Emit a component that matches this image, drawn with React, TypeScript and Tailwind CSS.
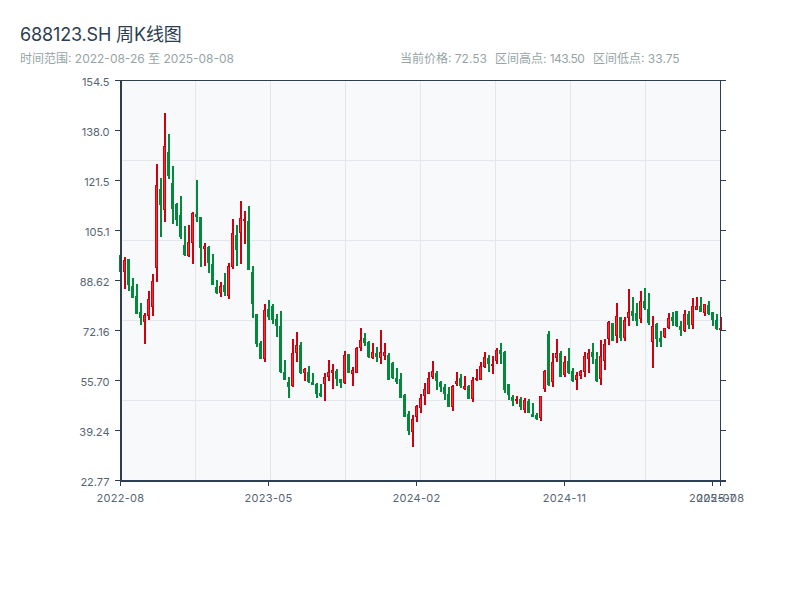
// Weekly candles, read as plot pixels: [wickTop, wickBottom, bodyTop, bodyBottom, rising]
type Candle = [number, number, number, number, 0 | 1];

const candles: Candle[] = [
  [255, 272, 255, 272, 0], [257, 289, 260, 272, 1], [259, 291, 259, 285, 0], [278, 298, 286, 298, 0],
  [284, 314, 296, 314, 0], [303, 325, 312, 318, 0], [313, 344, 315, 322, 1], [291, 320, 299, 316, 1],
  [274, 316, 281, 307, 1], [164, 282, 185, 268, 1], [178, 237, 189, 205, 0], [113, 222, 146, 210, 1],
  [134, 179, 152, 176, 0], [166, 224, 183, 209, 0], [203, 226, 204, 220, 0], [196, 239, 215, 237, 0],
  [226, 256, 245, 255, 0], [225, 257, 242, 256, 1], [212, 264, 213, 243, 1], [180, 222, 214, 217, 0],
  [217, 267, 217, 248, 0], [243, 266, 246, 249, 1], [246, 273, 247, 263, 0], [254, 285, 264, 285, 0],
  [280, 294, 287, 293, 0], [282, 297, 286, 293, 1], [273, 296, 285, 292, 0], [263, 299, 266, 296, 1],
  [219, 269, 233, 267, 1], [225, 266, 235, 250, 0], [201, 264, 218, 233, 1], [211, 244, 219, 221, 1],
  [206, 270, 221, 270, 0], [266, 318, 272, 304, 0], [314, 347, 314, 344, 0], [341, 359, 343, 359, 0],
  [304, 362, 310, 359, 1], [300, 320, 309, 317, 0], [304, 324, 306, 320, 0], [314, 337, 319, 326, 0],
  [311, 373, 326, 372, 0], [360, 380, 372, 380, 0], [377, 398, 382, 387, 0], [339, 387, 353, 386, 1],
  [332, 362, 345, 353, 1], [342, 374, 345, 373, 0], [368, 381, 369, 373, 1], [366, 383, 372, 382, 0],
  [373, 385, 382, 385, 0], [383, 398, 384, 394, 0], [384, 397, 393, 396, 0], [373, 401, 377, 384, 1],
  [360, 381, 372, 377, 1], [364, 389, 370, 373, 1], [369, 386, 371, 379, 0], [379, 388, 379, 383, 0],
  [351, 384, 355, 383, 1], [354, 373, 354, 373, 0], [367, 386, 370, 374, 1], [347, 373, 348, 373, 1],
  [328, 351, 340, 348, 1], [333, 346, 338, 343, 0], [341, 358, 342, 357, 0], [343, 359, 352, 358, 1],
  [347, 362, 353, 357, 0], [330, 364, 352, 358, 1], [343, 360, 352, 356, 1], [353, 380, 355, 380, 0],
  [362, 379, 363, 378, 0], [368, 384, 378, 382, 0], [373, 398, 379, 398, 0], [394, 417, 395, 417, 0],
  [411, 435, 414, 431, 0], [415, 447, 419, 432, 1], [405, 422, 406, 417, 1], [394, 413, 398, 408, 1],
  [383, 405, 389, 396, 1], [372, 394, 378, 394, 1], [361, 379, 371, 377, 1], [371, 390, 373, 381, 0],
  [381, 392, 382, 387, 0], [384, 400, 387, 394, 0], [387, 407, 394, 407, 0], [385, 411, 386, 407, 1],
  [372, 386, 381, 384, 1], [374, 388, 378, 386, 0], [376, 390, 386, 389, 1], [385, 399, 386, 399, 0],
  [377, 402, 380, 399, 1], [369, 381, 378, 380, 1], [362, 380, 366, 380, 1], [352, 368, 357, 367, 1],
  [355, 372, 358, 364, 0], [356, 374, 364, 366, 1], [348, 364, 350, 361, 1], [343, 364, 350, 354, 0],
  [351, 393, 352, 390, 0], [384, 400, 384, 395, 0], [395, 406, 397, 401, 0], [396, 404, 399, 401, 1],
  [397, 410, 399, 407, 0], [398, 413, 400, 410, 1], [399, 413, 401, 413, 0], [403, 417, 414, 417, 0],
  [413, 420, 415, 419, 0], [396, 421, 396, 418, 1], [370, 392, 371, 389, 1], [331, 386, 334, 385, 0],
  [353, 387, 362, 382, 1], [339, 362, 353, 358, 1], [351, 377, 353, 377, 0], [356, 377, 362, 375, 1],
  [348, 374, 361, 373, 0], [368, 382, 371, 381, 0], [372, 390, 375, 380, 1], [370, 379, 371, 376, 1],
  [352, 377, 356, 372, 1], [349, 373, 353, 359, 1], [343, 364, 352, 357, 0], [352, 382, 359, 381, 0],
  [340, 385, 356, 379, 1], [339, 370, 344, 361, 1], [321, 345, 322, 339, 1], [323, 341, 323, 341, 0],
  [303, 343, 316, 336, 1], [317, 341, 317, 338, 0], [317, 341, 320, 338, 1], [289, 326, 312, 318, 1],
  [297, 321, 311, 316, 0], [303, 326, 313, 321, 0], [291, 323, 301, 319, 1], [288, 310, 301, 308, 0],
  [293, 325, 309, 323, 0], [316, 368, 326, 342, 1], [323, 347, 324, 339, 0], [331, 347, 338, 342, 0],
  [328, 338, 328, 337, 1], [313, 329, 318, 328, 1], [312, 326, 317, 321, 0], [311, 327, 311, 326, 0],
  [321, 336, 326, 330, 0], [310, 332, 314, 331, 1], [311, 329, 314, 325, 0], [298, 329, 306, 325, 1],
  [297, 310, 306, 310, 1], [297, 312, 306, 312, 0], [304, 316, 304, 313, 1], [301, 315, 305, 314, 0],
  [312, 326, 312, 320, 0], [314, 330, 320, 329, 0], [317, 330, 328, 330, 1],
];

const yTicks = [
  { y: 80.5, label: "154.5" },
  { y: 130.5, label: "138.0" },
  { y: 180.5, label: "121.5" },
  { y: 230.5, label: "105.1" },
  { y: 280.5, label: "88.62" },
  { y: 330.5, label: "72.16" },
  { y: 380.5, label: "55.70" },
  { y: 430.5, label: "39.24" },
  { y: 480.5, label: "22.77" },
];

const xTicks = [
  { x: 120.5, label: "2022-08" },
  { x: 268.5, label: "2023-05" },
  { x: 416.5, label: "2024-02" },
  { x: 564.5, label: "2024-11" },
  { x: 712.5, label: "2025-07" },
  { x: 720.5, label: "2025-08" },
];

const AXIS = "#2c3e50";
const GRID = "#e3e6ec";
const LABEL = "#566573";
const RED_EDGE = "#d0000f";
const RED_FILL = "#ff2a2a";
const GREEN = "#008a3a";

function KLine() {
  return (
    <svg width={800} height={530} viewBox="0 70 800 530" className="block">
      <rect x={120} y={81} width={600} height={400} fill="#f8f9fb" />

      {/* grid */}
      {[195.5, 270.5, 345.5, 420.5, 495.5, 570.5, 645.5].map((x) => (
        <line key={x} x1={x} x2={x} y1={81} y2={481} stroke={GRID} />
      ))}
      {[160.5, 240.5, 320.5, 400.5].map((y) => (
        <line key={y} x1={120} x2={720} y1={y} y2={y} stroke={GRID} />
      ))}

      {/* candles */}
      {candles.map(([wt, wb, bt, bb, up], i) => {
        const x = 121 + i * 4;
        return (
          <g key={i}>
            <line x1={x} x2={x} y1={wt} y2={wb} stroke={up ? RED_EDGE : GREEN} strokeWidth={2} />
            <rect
              x={x - 1.5}
              y={bt + 0.5}
              width={2}
              height={Math.max(bb - bt - 1, 1)}
              fill={up ? RED_FILL : GREEN}
              stroke={up ? RED_EDGE : GREEN}
            />
          </g>
        );
      })}

      {/* axes */}
      <line x1={120} x2={726} y1={80.5} y2={80.5} stroke={AXIS} />
      <line x1={720.5} x2={720.5} y1={81} y2={481} stroke={AXIS} />
      <line x1={121} x2={121} y1={80} y2={482} stroke={AXIS} strokeWidth={2} />
      <line x1={120} x2={726} y1={481} y2={481} stroke={AXIS} strokeWidth={2} />

      {yTicks.map((t) => (
        <g key={t.label}>
          <line x1={115} x2={120} y1={t.y} y2={t.y} stroke={AXIS} />
          <line x1={720} x2={726} y1={t.y} y2={t.y} stroke={AXIS} />
          <text x={109.5} y={t.y + 5} textAnchor="end" fontSize={11} fill={LABEL}>
            {t.label}
          </text>
        </g>
      ))}
      {xTicks.map((t) => (
        <g key={t.label}>
          <line x1={t.x} x2={t.x} y1={481} y2={486} stroke={AXIS} />
          <text x={t.x} y={502} textAnchor="middle" fontSize={11} letterSpacing={0.3} fill={LABEL}>
            {t.label}
          </text>
        </g>
      ))}
    </svg>
  );
}

export default function App() {
  return (
    <div className="w-[800px] h-[600px] bg-white font-['Inter','Noto_Sans_CJK_SC',sans-serif] overflow-hidden">
      <div className="h-[70px] px-5 pt-[24px]">
        <h1 className="text-[18px] leading-[22px] font-normal tracking-[-0.15px] text-[#2c3e50]">688123.SH 周K线图</h1>
        <div className="flex mt-[5px] text-[12px] leading-[16px] text-[#95a5a6]">
          <span className="w-[380px]">时间范围: 2022-08-26 至 2025-08-08</span>
          <span className="w-[95px]">当前价格: 72.53</span>
          <span className="w-[98px]">
            区间高点: <span className="tracking-[-0.6px]">143.50</span>
          </span>
          <span>区间低点: 33.75</span>
        </div>
      </div>
      <KLine />
    </div>
  );
}
